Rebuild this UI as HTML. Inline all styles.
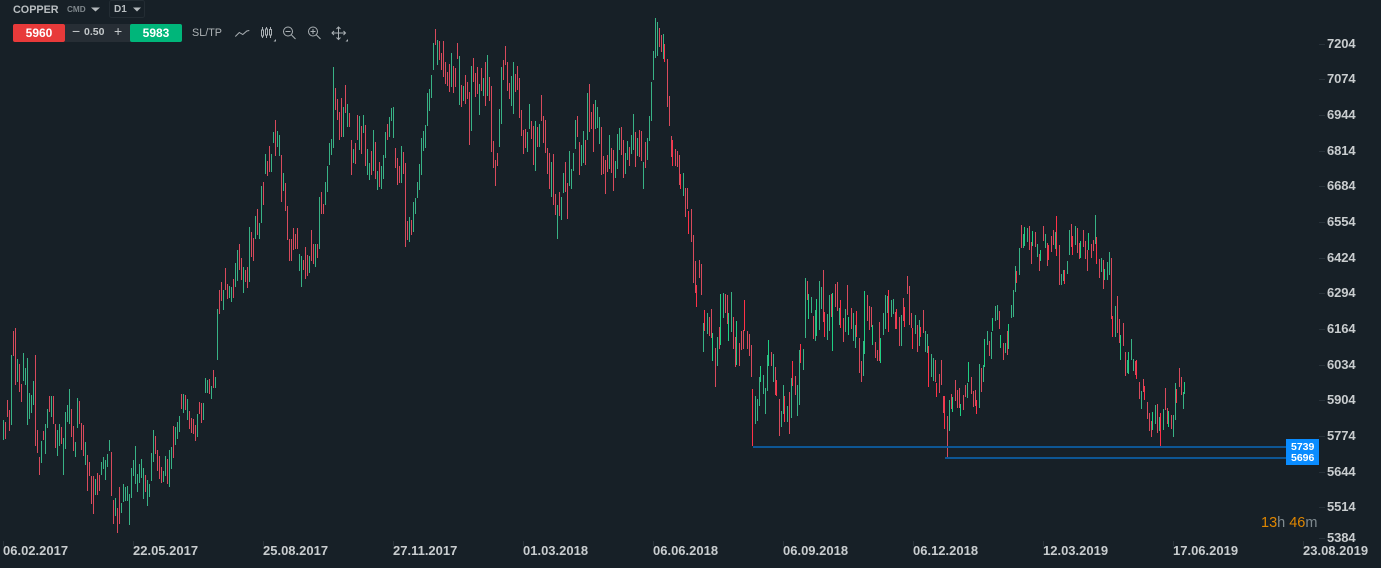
<!DOCTYPE html>
<html><head><meta charset="utf-8"><title>COPPER</title>
<style>
html,body{margin:0;padding:0;width:1381px;height:568px;overflow:hidden;background:#172027}
body{position:relative;font-family:"Liberation Sans",sans-serif}
svg{position:absolute;left:0;top:0}
.t{position:absolute;white-space:nowrap;line-height:14px}
.y{left:1327px;font-size:13px;color:#c9cdcf;font-weight:bold;letter-spacing:-.1px}
.x{top:544px;font-size:13px;color:#c9cdcf;font-weight:bold}
.b{position:absolute;top:24px;height:18px;width:52px;border-radius:2px;color:#fff;font-size:12px;font-weight:bold;line-height:18px;text-align:center}
</style></head><body>
<svg width="1381" height="568" viewBox="0 0 1381 568">
<g transform="translate(.5 0)" fill="none" stroke-width="1" shape-rendering="crispEdges">
<path stroke="#d84a5c" d="M5 422V439M7 400V417M9 410V431M13 331V356M15 328V385M19 364V392M21 384V402M35 355V446M37 430V453M39 457V475M43 431V440M49 396V412M53 396V424M55 424V448M61 427V444M71 409V437M73 426V451M79 401V424M81 423V450M83 425V456M87 455V491M89 462V476M91 476V504M93 476V514M97 473V495M99 475V491M111 452V496M113 500V524M117 508V533M119 487V524M145 475V492M155 436V454M157 450V471M159 456V479M161 467V483M167 459V484M173 426V458M181 394V409M185 395V410M189 411V429M191 418V433M193 419V434M195 425V441M199 402V414M201 403V423M209 379V394M213 370V388M219 290V314M221 282V301M225 268V290M227 284V299M233 279V298M239 244V270M241 258V280M245 270V282M247 267V288M251 232V257M253 238V261M257 209V235M263 182V205M267 161V176M269 146V172M275 120V156M281 155V202M285 183V211M287 206V240M289 239V261M291 239V261M293 228V250M295 234V249M297 228V249M303 260V270M305 247V279M307 255V276M311 230V261M313 244V264M317 244V258M321 192V214M323 204V214M335 88V110M337 99V120M339 112V140M341 98V137M345 85V113M349 113V127M351 140V175M355 143V164M357 115V140M361 126V154M365 125V166M371 151V175M375 142V179M379 162V187M387 124V140M395 148V168M397 158V185M399 166V183M403 152V174M405 163V247M407 221V240M411 220V235M435 29V45M439 41V60M441 53V70M443 41V77M445 62V84M447 72V86M449 64V92M453 66V93M455 68V87M457 43V59M461 85V107M465 75V104M467 82V99M469 92V145M473 58V82M475 73V97M477 67V94M481 68V91M485 62V106M489 77V101M491 86V152M493 141V168M495 160V186M497 153V166M503 60V80M505 46V65M507 62V91M509 83V99M515 74V92M517 66V90M519 78V118M521 110V136M523 130V154M525 129V148M531 121V139M533 126V165M537 127V147M541 95V121M543 116V143M545 120V153M547 148V174M549 153V189M553 154V205M555 194V215M559 192V216M565 162V192M567 183V219M577 116V137M579 142V175M585 140V165M589 84V132M591 112V129M593 104V152M601 127V175M603 156V174M605 160V194M607 155V172M611 148V173M613 150V191M621 127V155M623 140V178M629 147V166M635 132V167M639 130V157M641 131V161M645 142V168M659 28V47M661 35V52M667 59V107M669 96V126M671 136V157M675 149V166M677 151V167M679 155V185M685 188V217M687 188V209M691 209V242M693 235V283M695 261V293M699 260V278M701 264V295M709 317V336M711 309V338M715 348V387M719 327V349M725 294V313M727 295V324M733 317V349M735 337V367M739 343V366M741 331V350M743 330V349M747 331V349M749 334V356M751 345V377M771 352V366M775 367V395M779 399V436M789 392V434M795 376V395M807 281V300M813 316V339M823 270V322M831 294V317M835 284V307M837 282V311M843 318V342M847 285V315M851 308V329M859 338V373M861 361V382M867 295V321M869 306V330M871 307V327M875 342V358M877 350V361M879 322V361M895 312V329M899 317V346M903 298V321M907 276V294M909 286V325M911 313V328M917 325V352M923 310V333M935 360V382M939 374V393M941 360V385M943 396V413M947 416V458M951 394V409M955 380V401M957 390V408M959 388V408M963 395V410M965 385V397M971 377V394M973 391V407M975 390V406M981 368V392M989 341V356M999 311V329M1003 343V360M1007 331V355M1021 225V248M1029 226V250M1031 242V264M1035 232V247M1039 254V271M1043 226V241M1047 243V266M1051 236V252M1053 230V245M1059 245V285M1071 224V247M1077 228V253M1079 243V259M1083 230V247M1085 241V259M1087 250V271M1091 244V258M1093 240V251M1099 259V278M1103 260V289M1111 258V319M1117 296V333M1119 319V343M1123 323V346M1125 352V376M1135 361V375M1139 382V399M1143 379V392M1147 402V419M1149 413V431M1151 421V437M1157 404V433M1165 388V410M1167 408V424M1171 415V429M1179 368V387M1181 377V395"/>
<path stroke="#38b285" d="M3 420V440M11 355V425M17 359V382M23 353V381M25 368V385M27 358V425M29 393V419M31 395V413M33 381V405M41 441V463M45 424V454M47 409V428M51 396V417M57 430V456M59 424V446M63 438V475M65 412V449M67 405V422M69 389V424M75 442V457M77 398V428M85 442V465M95 479V495M101 462V475M103 457V469M105 460V480M107 454V467M109 440V451M115 498V516M121 503V513M123 484V502M125 487V501M127 486V501M129 494V525M131 468V498M133 460V476M135 446V484M137 474V492M139 464V483M141 459V478M143 468V499M147 480V506M149 484V497M151 453V481M153 430V462M163 471V482M165 456V476M169 450V487M171 447V469M175 427V445M177 422V439M179 416V432M183 394V413M187 399V420M197 414V437M203 403V420M205 378V393M207 380V393M211 386V399M215 377V388M217 309V360M223 290V310M229 286V298M231 287V302M235 263V287M237 250V281M243 267V293M249 227V282M255 216V239M259 223V239M261 186V223M265 154V174M271 154V172M273 132V143M277 131V147M279 135V156M283 173V191M299 254V271M301 256V287M309 256V273M315 244V267M319 197V249M325 182V205M327 166V192M329 143V165M331 139V155M333 67V148M343 107V137M347 104V127M353 149V163M359 116V150M363 115V133M367 149V175M369 163V180M373 130V171M377 171V190M381 166V189M383 155V179M385 132V158M389 117V137M391 108V121M393 107V138M401 146V183M409 217V242M413 202V232M415 198V214M417 182V198M419 164V190M421 138V175M423 131V151M425 125V148M427 93V126M429 89V111M431 75V98M433 43V70M437 40V65M451 53V87M459 56V105M463 86V101M471 66V131M479 84V115M483 78V96M487 55V96M499 109V147M501 67V124M511 76V106M513 62V114M527 132V152M529 104V129M535 121V171M539 124V147M551 162V197M557 205V239M561 197V220M563 173V193M569 151V186M571 169V189M573 153V171M575 120V149M581 145V166M583 131V163M587 93V140M595 100V129M597 107V128M599 117V144M609 135V169M615 161V178M617 134V169M619 128V150M625 153V174M627 141V160M631 135V154M633 114V150M637 138V156M643 162V189M647 138V160M649 116V141M651 82V121M653 51V80M655 18V58M657 22V56M663 34V59M683 173V196M703 323V352M707 313V334M717 337V366M723 293V318M731 292V332M755 396V424M757 399V421M759 377V406M763 375V394M765 388V414M767 355V391M773 354V382M781 411V427M783 385V414M787 406V422M791 378V418M797 385V416M799 350V405M803 349V370M805 278V338M811 297V313M815 310V341M819 281V330M821 287V309M827 314V340M829 295V331M839 308V325M845 309V332M853 313V341M855 325V348M863 341V376M883 313V335M885 295V329M887 296V313M891 300V317M893 299V314M901 315V346M915 315V334M919 320V346M925 331V352M927 334V353M931 354V377M933 358V381M949 400V431M967 383V398M979 364V408M983 365V382M987 331V345M991 332V359M995 306V321M997 305V320M1005 343V353M1011 305V318M1013 290V317M1015 266V292M1019 248V275M1023 234V248M1027 228V242M1037 244V257M1045 234V248M1055 232V249M1061 274V285M1063 270V281M1067 261V274M1069 230V255M1075 226V245M1095 215V244M1101 258V272M1107 262V280M1109 252V275M1115 306V337M1127 360V373M1131 339V360M1133 359V371M1141 391V409M1155 405V424M1159 417V431M1163 409V430M1173 415V437M1175 383V420M1183 392V409"/>
<path stroke="#ff3148" d="M664 44V62M672 140V166M680 174V189M688 211V234M696 285V307M704 310V331M744 300V331M752 389V446M776 380V396M784 396V422M792 361V386M800 344V363M824 312V337M840 300V328M856 311V337M888 290V332M896 309V329M904 307V327M912 328V349M920 327V337M928 346V387M936 383V397M944 396V429M976 400V414M1016 271V283M1048 245V260M1056 216V256M1064 270V284M1072 236V255M1096 237V264M1112 316V337M1136 360V379M1144 386V400M1160 413V447M1176 389V403"/>
<path stroke="#1fd083" d="M712 333V361M720 294V345M728 313V341M736 321V365M760 366V382M768 340V366M808 294V319M816 299V336M832 293V351M848 317V335M864 291V354M872 325V345M880 338V363M952 397V412M960 404V416M968 362V382M984 339V367M992 318V331M1000 335V348M1008 324V349M1024 227V246M1032 231V246M1040 250V261M1080 241V258M1088 233V250M1104 269V280M1120 335V360M1128 352V374M1152 412V430M1168 411V427M1184 382V394"/>
</g>
<g stroke="#28323a" stroke-width="1" shape-rendering="crispEdges">
<path d="M1319 44.5h6M1319 79.5h6M1319 115.5h6M1319 151.5h6M1319 186.5h6M1319 222.5h6M1319 258.5h6M1319 293.5h6M1319 329.5h6M1319 365.5h6M1319 400.5h6M1319 436.5h6M1319 472.5h6M1319 507.5h6M1319 538.5h6"/>
<path d="M3.5 541v5M133.5 541v5M263.5 541v5M393.5 541v5M523.5 541v5M653.5 541v5M783.5 541v5M913.5 541v5M1043.5 541v5M1173.5 541v5M1303.5 541v5"/>
</g>
<rect x="753" y="446" width="534" height="2" fill="#0d5694"/>
<rect x="945" y="457" width="342" height="2" fill="#0d5694"/>
<rect x="1286" y="439" width="33" height="26" fill="#0a8cff"/>
<path d="M91 7.500h9l-4.500 4z" fill="#b5babd"/>
<path d="M133 7.500h8l-4 4z" fill="#b5babd"/>
<rect x="109.500" y=".5" width="35" height="17" rx="2" fill="none" stroke="#232c33"/>
<g fill="none" stroke="#aab0b4" stroke-width="1">
<path d="M235.300 36.500l4-4 3.500 2 4-3.500 2.500-.5"/>
<path d="M262.500 27v3M262.500 36v2M266.500 27v2M266.500 35v3M270.500 27v2.500M270.500 35v3"/>
<rect x="261.500" y="30" width="2" height="6"/><rect x="265.500" y="29" width="2" height="6"/><rect x="269.500" y="29.500" width="2" height="5.500"/>
<circle cx="288" cy="31.500" r="4.500"/><path d="M285.500 31.500h5M291.500 35l4 4"/>
<circle cx="313" cy="31.500" r="4.500"/><path d="M310.500 31.500h5M313 29v5M316.500 35l4 4"/>
<path d="M332.500 33h12.500M338.500 27v12.500M336.500 29l2-2 2 2M336.500 37.500l2 2 2-2M334 31l-2 2 2 2M343.500 31l2 2-2 2"/>
</g>
<path d="M276 39v2.500h-2.500zM348 39v2.500h-2.500z" fill="#aab0b4"/>
</svg>
<div class="t" style="left:13px;top:3px;font-size:10.800px;font-weight:bold;color:#b9bec1">COPPER</div>
<div class="t" style="left:67px;top:3px;font-size:8.200px;font-weight:bold;color:#7f878c">CMD</div>
<div class="t" style="left:114px;top:3px;font-size:10px;font-weight:bold;color:#b9bec1">D1</div>
<div style="position:absolute;left:65px;top:24px;width:66px;height:18px;background:#272e35"></div>
<div class="b" style="left:13px;background:#e83a3a">5960</div>
<div class="b" style="left:130px;background:#00b67a">5983</div>
<div class="t" style="left:72px;top:24px;font-size:14px;color:#c5c9cb">−</div>
<div class="t" style="left:84px;top:25px;font-size:10.500px;font-weight:bold;color:#c5c9cb">0.50</div>
<div class="t" style="left:114px;top:24px;font-size:14px;color:#c5c9cb">+</div>
<div class="t" style="left:192px;top:26px;font-size:10.800px;color:#aeb3b6">SL/TP</div>
<div class="t y" style="top:37px">7204</div>
<div class="t y" style="top:72px">7074</div>
<div class="t y" style="top:108px">6944</div>
<div class="t y" style="top:144px">6814</div>
<div class="t y" style="top:179px">6684</div>
<div class="t y" style="top:215px">6554</div>
<div class="t y" style="top:251px">6424</div>
<div class="t y" style="top:286px">6294</div>
<div class="t y" style="top:322px">6164</div>
<div class="t y" style="top:358px">6034</div>
<div class="t y" style="top:393px">5904</div>
<div class="t y" style="top:429px">5774</div>
<div class="t y" style="top:465px">5644</div>
<div class="t y" style="top:500px">5514</div>
<div class="t y" style="top:531px">5384</div>
<div class="t x" style="left:3px">06.02.2017</div>
<div class="t x" style="left:133px">22.05.2017</div>
<div class="t x" style="left:263px">25.08.2017</div>
<div class="t x" style="left:393px">27.11.2017</div>
<div class="t x" style="left:523px">01.03.2018</div>
<div class="t x" style="left:653px">06.06.2018</div>
<div class="t x" style="left:783px">06.09.2018</div>
<div class="t x" style="left:913px">06.12.2018</div>
<div class="t x" style="left:1043px">12.03.2019</div>
<div class="t x" style="left:1173px">17.06.2019</div>
<div class="t x" style="left:1303px">23.08.2019</div>
<div class="t" style="left:1291px;top:441px;font-size:10.500px;font-weight:bold;color:#fff;line-height:12px">5739</div>
<div class="t" style="left:1291px;top:452px;font-size:10.500px;font-weight:bold;color:#fff;line-height:12px">5696</div>
<div class="t" style="left:1261px;top:515px;font-size:14.500px;color:#7f8a8f;line-height:16px"><span style="color:#df8600">13</span>h <span style="color:#df8600">46</span>m</div>
</body></html>
